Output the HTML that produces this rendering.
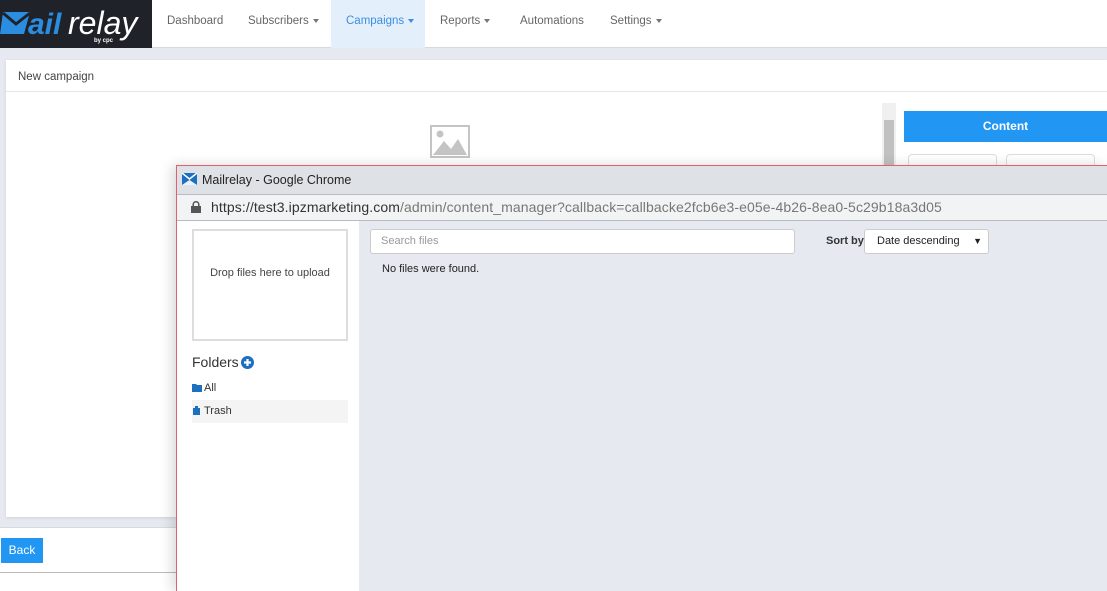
<!DOCTYPE html>
<html><head><meta charset="utf-8"><style>
*{box-sizing:border-box;margin:0;padding:0}
html,body{width:1107px;height:591px;overflow:hidden}
body{background:#e6e9f0;font-family:"Liberation Sans",sans-serif;position:relative}
.abs{position:absolute}
.nav{left:0;top:0;width:1107px;height:48px;background:#fff;border-bottom:1px solid #d6d9df}
.logo{left:0;top:0;width:152px;height:48px;background:#1f2329}
.ni{top:0;height:48px;line-height:42px;font-size:11.5px;color:#666}
.car{display:inline-block;border-top:4px solid #777;border-left:3.5px solid transparent;border-right:3.5px solid transparent;vertical-align:middle;margin-left:4px}
</style></head><body>
<div class="abs nav"></div>
<div class="abs logo">
<svg width="152" height="48" viewBox="0 0 152 48">
<path d="M3 12 L30 12 L24 34 L0 34 Z" fill="#2a8de0"/>
<path d="M3 13 L16 24 L30 13" stroke="#1f2329" stroke-width="3" fill="none"/>
<text x="28" y="34" font-family="Liberation Sans" font-style="italic" font-weight="bold" font-size="30" fill="#2a8de0">ail</text>
<text x="68" y="34" font-family="Liberation Sans" font-style="italic" font-size="32" fill="#fff">relay</text>
<text x="94" y="42" font-family="Liberation Sans" font-weight="bold" font-size="6" fill="#fff">by cpc</text>
</svg></div>
<div class="abs ni" style="left:167px">Dashboard</div>
<div class="abs ni" style="left:248px">Subscribers<span class="car"></span></div>
<div class="abs ni" style="left:331px;width:94px;background:#e3effb;color:#3c8fe0;padding-left:15px">Campaigns<span class="car" style="border-top-color:#3c8fe0"></span></div>
<div class="abs ni" style="left:440px">Reports<span class="car"></span></div>
<div class="abs ni" style="left:520px">Automations</div>
<div class="abs ni" style="left:610px">Settings<span class="car"></span></div>

<div class="abs" style="left:6px;top:60px;width:1101px;height:457px;background:#fff;box-shadow:0 1px 3px rgba(0,0,0,.1)"></div>
<div class="abs" style="left:18px;top:71px;font-size:11.5px;color:#444">New campaign</div>
<div class="abs" style="left:6px;top:91px;width:1101px;height:1px;background:#e5e5e5"></div>
<svg class="abs" style="left:430px;top:125px" width="40" height="33"><rect x="1" y="1" width="38" height="31" fill="none" stroke="#c4c4c4" stroke-width="2"/><circle cx="10" cy="9" r="3.5" fill="#c4c4c4"/><path d="M3 30 L14 16 L21 24 L28 14 L37 30Z" fill="#c4c4c4"/></svg>
<div class="abs" style="left:882px;top:103px;width:14px;height:65px;background:#f0f0f0"></div>
<div class="abs" style="left:884px;top:120px;width:10px;height:48px;background:#c1c1c1"></div>
<div class="abs" style="left:904px;top:111px;width:203px;height:31px;background:#2196f3;color:#fff;font-size:12px;font-weight:bold;text-align:center;line-height:31px">Content</div>
<div class="abs" style="left:908px;top:154px;width:89px;height:20px;border:1px solid #ddd;border-radius:4px"></div>
<div class="abs" style="left:1006px;top:154px;width:89px;height:20px;border:1px solid #ddd;border-radius:4px"></div>

<div class="abs" style="left:0;top:527px;width:176px;height:64px;background:#fff;border-top:1px solid #d6d9df"></div>
<div class="abs" style="left:1px;top:538px;width:42px;height:25px;background:#2196f3;color:#fff;font-size:12px;line-height:25px;text-align:center">Back</div>
<div class="abs" style="left:0;top:572px;width:176px;height:1px;background:#bbb"></div>

<div class="abs" style="left:176px;top:165px;width:931px;height:426px;border-left:1px solid #e06070;border-top:1px solid #e06070;background:#e6e9f0;box-shadow:-4px 0 12px rgba(0,0,0,.15);overflow:hidden">
<div class="abs" style="left:0;top:0;width:930px;height:28px;background:#dee1e6"></div>
<svg class="abs" style="left:5px;top:7px" width="15" height="12"><rect width="15" height="12" fill="#1d6fc0"/><path d="M0 0 L7.5 6 L15 0" stroke="#fff" stroke-width="1.5" fill="none"/><path d="M0 12 L7.5 7 L15 12Z" fill="#eaf2fb"/></svg>
<div class="abs" style="left:25px;top:7px;font-size:12.5px;color:#222">Mailrelay - Google Chrome</div>
<div class="abs" style="left:0;top:28px;width:930px;height:27px;background:#f1f3f4;border-top:1px solid #b8bcc2;border-bottom:1px solid #b8bcc2"></div>
<svg class="abs" style="left:14px;top:35px" width="10" height="12"><rect x="0" y="5" width="10" height="7" fill="#555"/><path d="M2.2 5.5 V3.5 a2.8 2.8 0 0 1 5.6 0 V5.5" stroke="#555" stroke-width="1.5" fill="none"/></svg>
<div class="abs" style="left:34px;top:33px;font-size:14px;letter-spacing:0.1px;color:#777;white-space:nowrap"><span style="color:#333">https://test3.ipzmarketing.com</span>/admin/content_manager?callback=callbacke2fcb6e3-e05e-4b26-8ea0-5c29b18a3d05</div>
<div class="abs" style="left:0;top:55px;width:182px;height:371px;background:#fff"></div>
<div class="abs" style="left:15px;top:63px;width:156px;height:112px;border:2px solid #ddd;font-size:11px;color:#444;text-align:center;line-height:84px">Drop files here to upload</div>
<div class="abs" style="left:15px;top:188px;font-size:14px;color:#333">Folders</div>
<svg class="abs" style="left:64px;top:190px" width="13" height="13"><circle cx="6.5" cy="6.5" r="6.5" fill="#1d6fc0"/><path d="M6.5 3v7M3 6.5h7" stroke="#fff" stroke-width="2.2"/></svg>
<svg class="abs" style="left:15px;top:218px" width="10" height="8"><path d="M0 0h4l1 1h5v7H0z" fill="#1d6fc0"/></svg>
<div class="abs" style="left:27px;top:216px;font-size:11px;color:#333">All</div>
<div class="abs" style="left:15px;top:234px;width:156px;height:23px;background:#f4f4f4"></div>
<svg class="abs" style="left:16px;top:240px" width="7" height="9"><rect x="0" y="2" width="7" height="7" fill="#1d6fc0"/><rect x="2" y="0" width="3" height="2" fill="#1d6fc0"/></svg>
<div class="abs" style="left:27px;top:239px;font-size:11px;color:#333">Trash</div>
<div class="abs" style="left:193px;top:63px;width:425px;height:25px;background:#fff;border:1px solid #ccc;border-radius:3px;font-size:11px;color:#999;padding-left:10px;line-height:23px">Search files</div>
<div class="abs" style="left:205px;top:97px;font-size:11px;color:#222">No files were found.</div>
<div class="abs" style="left:649px;top:69px;font-size:11px;font-weight:bold;color:#333">Sort by</div>
<div class="abs" style="left:687px;top:63px;width:125px;height:25px;background:#fff;border:1px solid #ccc;border-radius:3px;font-size:11px;color:#222;padding-left:12px;line-height:23px">Date descending<span style="position:absolute;right:6px;font-size:9px">▼</span></div>
</div>
</body></html>
